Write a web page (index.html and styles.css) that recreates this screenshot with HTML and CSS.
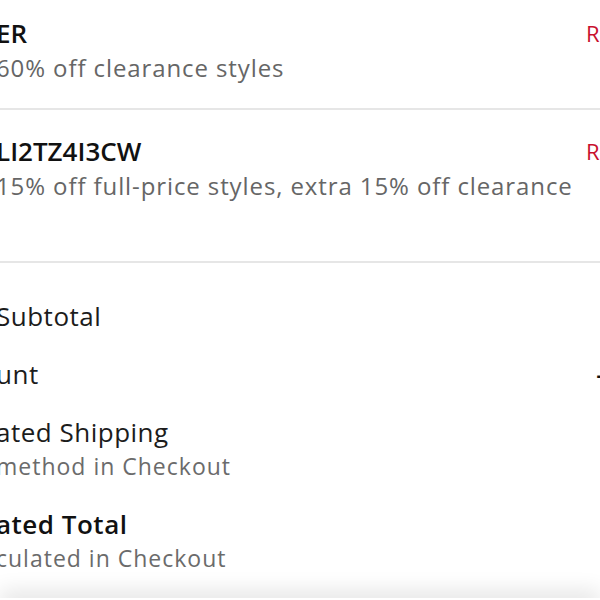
FILE: index.html
```html
<!DOCTYPE html>
<html lang="en">
<head>
<meta charset="utf-8">
<title>Bag summary</title>
<link rel="stylesheet" href="styles.css">
</head>
<body>
<div class="sheet">
  <section class="promo">
    <div class="promo-info">
      <div class="promo-code">ER</div>
      <div class="promo-desc">60% off clearance styles</div>
    </div>
    <a class="promo-remove" href="#">Remove</a>
  </section>
  <section class="promo promo-tall">
    <div class="promo-info">
      <div class="promo-code">LI2TZ4I3CW</div>
      <div class="promo-desc">15% off full-price styles, extra 15% off clearance</div>
    </div>
    <a class="promo-remove" href="#">Remove</a>
  </section>
  <section class="summary">
    <div class="row">
      <div class="label">Subtotal</div>
      <div class="value">$88.00</div>
    </div>
    <div class="row">
      <div class="label">unt</div>
      <div class="value">-$13.20</div>
    </div>
    <div class="row">
      <div class="label-group">
        <div class="label">ated Shipping</div>
        <div class="sub">method in Checkout</div>
      </div>
    </div>
    <div class="row">
      <div class="label-group">
        <div class="label label-strong">ated Total</div>
        <div class="sub">culated in Checkout</div>
      </div>
    </div>
  </section>
</div>
<div class="footer-bar"></div>
</body>
</html>
```
FILE: styles.css
```css
html, body {
  margin: 0;
  padding: 0;
  background: #ffffff;
  overflow: hidden;
  height: 600px;
}

body {
  font-family: "Open Sans", "Liberation Sans", sans-serif;
  color: #1c1c1c;
}

.sheet {
  width: 690px;
  margin-top: -8px;
  margin-left: -4px;
}

.promo {
  display: flex;
  justify-content: space-between;
  align-items: flex-start;
  padding: 25px 14px 23px 0;
  border-bottom: 2px solid #e6e6e6;
}

.promo-tall {
  padding-bottom: 58px;
}

.promo-info {
  white-space: nowrap;
}

.promo-code {
  font-size: 26px;
  font-weight: 600;
  line-height: 32px;
  color: #111111;
}

.promo-desc {
  margin-top: 2px;
  font-size: 24px;
  line-height: 34px;
  letter-spacing: 0.9px;
  color: #666666;
}

.promo-remove {
  font-size: 22px;
  line-height: 32px;
  color: #c8102e;
  text-decoration: none;
  letter-spacing: 0.5px;
}

.summary {
  padding-top: 37px;
  display: flex;
  flex-direction: column;
  gap: 26px;
}

.row {
  display: flex;
  justify-content: space-between;
  align-items: flex-start;
  white-space: nowrap;
}

.label {
  font-size: 26px;
  line-height: 32px;
  letter-spacing: 0.5px;
  color: #1c1c1c;
}

.label-strong {
  font-weight: 600;
  color: #111111;
}

.sub {
  margin-top: 3px;
  font-size: 23px;
  line-height: 31px;
  letter-spacing: 1px;
  color: #6b6b6b;
}

.value {
  font-size: 26px;
  line-height: 32px;
  font-weight: 600;
  color: #111111;
}

.footer-bar {
  position: fixed;
  left: 0;
  right: 0;
  top: 598px;
  height: 20px;
  background: #ffffff;
  box-shadow: 0 -6px 22px rgba(0, 0, 0, 0.12);
}
```
